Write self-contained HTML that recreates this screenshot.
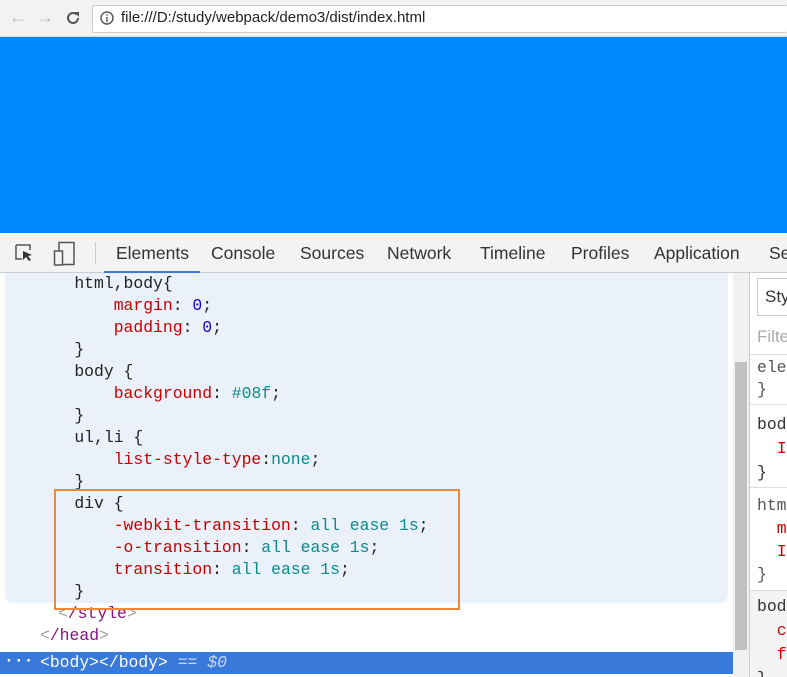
<!DOCTYPE html>
<html><head><style>
*{margin:0;padding:0;box-sizing:border-box}
body{width:787px;height:677px;overflow:hidden;position:relative;background:#fff;font-family:"Liberation Sans",sans-serif}
.abs{position:absolute}
.code{font-family:"Liberation Mono",monospace;font-size:16.4px;line-height:22px;white-space:pre;color:#222}
.r{color:#c80000}.n{color:#1c00cf}.t{color:#0a8a8a}.tag{color:#881280}.g{color:#a0a0a0}
</style></head><body>
<div class="abs" style="left:0;top:0;width:787px;height:37px;background:#f2f2f2;border-bottom:1px solid #ddd"></div>
<div class="abs" style="left:9px;top:7px;color:#bbb;font-size:18px">&#8592;</div>
<div class="abs" style="left:36px;top:7px;color:#bbb;font-size:18px">&#8594;</div>
<svg class="abs" style="left:65px;top:10px" width="16" height="16" viewBox="0 0 16 16"><path d="M13 8a5 5 0 1 1-1.5-3.6" fill="none" stroke="#555" stroke-width="2"/><path d="M9 2h5v5z" fill="#555"/></svg>
<div class="abs" style="left:92px;top:5px;width:695px;height:28px;background:#fff;border:1px solid #ccc;border-right:none;border-radius:2px"></div>
<svg class="abs" style="left:100px;top:11px" width="14" height="14"><circle cx="7" cy="7" r="6" fill="none" stroke="#555" stroke-width="1.4"/><rect x="6.3" y="6" width="1.4" height="5" fill="#555"/><rect x="6.3" y="3.2" width="1.4" height="1.4" fill="#555"/></svg>
<div class="abs" style="left:121px;top:9px;font-size:15px;color:#222">file:///D:/study/webpack/demo3/dist/index.html</div>
<div class="abs" style="left:0;top:37px;width:787px;height:196px;background:#0088ff"></div>
<div class="abs" style="left:0;top:233px;width:787px;height:40px;background:#f3f3f3;border-bottom:1px solid #ccc"></div>
<svg class="abs" style="left:14px;top:243px" width="22" height="22"><path d="M2 2h14v5M2 2v14h6" fill="none" stroke="#555" stroke-width="1.5"/><path d="M9 8l9 4-4 1 3 4-2 1-3-4-3 3z" fill="#333"/></svg>
<svg class="abs" style="left:53px;top:241px" width="24" height="26"><rect x="6" y="1.5" width="15" height="22" fill="none" stroke="#555" stroke-width="1.5"/><rect x="1.5" y="10" width="8" height="14" fill="#f3f3f3" stroke="#555" stroke-width="1.5"/></svg>
<div class="abs" style="left:95px;top:242px;width:1px;height:22px;background:#ccc"></div>
<div class="abs" style="left:104px;top:243px;font-size:17.5px;color:#333;word-spacing:0">
<span style="position:absolute;left:12px">Elements</span><span style="position:absolute;left:107px">Console</span><span style="position:absolute;left:196px">Sources</span><span style="position:absolute;left:283px">Network</span><span style="position:absolute;left:376px">Timeline</span><span style="position:absolute;left:467px">Profiles</span><span style="position:absolute;left:550px">Application</span><span style="position:absolute;left:665px">Se</span></div>
<div class="abs" style="left:104px;top:271px;width:96px;height:2px;background:#3879d9"></div>
<div class="abs" style="left:5px;top:273px;width:723px;height:330px;background:#ebf1fa;border-radius:0 0 8px 8px"></div>
<div class="abs code" style="left:35px;top:273px">    html,body{
        <span class="r">margin</span>: <span class="n">0</span>;
        <span class="r">padding</span>: <span class="n">0</span>;
    }
    body {
        <span class="r">background</span>: <span class="t">#08f</span>;
    }
    ul,li {
        <span class="r">list-style-type</span>:<span class="t">none</span>;
    }
    div {
        <span class="r">-webkit-transition</span>: <span class="t">all ease 1s</span>;
        <span class="r">-o-transition</span>: <span class="t">all ease 1s</span>;
        <span class="r">transition</span>: <span class="t">all ease 1s</span>;
    }</div>
<div class="abs code" style="left:58px;top:603px"><span class="tag"><span class="g">&lt;</span>/style<span class="g">&gt;</span></span></div>
<div class="abs code" style="left:40px;top:625px"><span class="tag"><span class="g">&lt;</span>/head<span class="g">&gt;</span></span></div>
<div class="abs" style="left:54px;top:489px;width:406px;height:121px;border:2px solid #f0883a"></div>
<div class="abs" style="left:0;top:652px;width:733px;height:22px;background:#3879d9"></div>
<div class="abs code" style="left:4px;top:650px;color:#fff;font-weight:bold">···</div>
<div class="abs code" style="left:40px;top:652px;color:#fff">&lt;body&gt;&lt;/body&gt; <span style="color:#c8d8f5">== <i>$0</i></span></div>
<div class="abs" style="left:733px;top:273px;width:16px;height:404px;background:#f1f1f1"></div>
<div class="abs" style="left:735px;top:362px;width:12px;height:288px;background:#c1c1c1"></div>
<div class="abs" style="left:749px;top:273px;width:1px;height:404px;background:#ccc"></div>
<div class="abs" style="left:750px;top:273px;width:37px;height:404px;background:#fff;overflow:hidden">
<div class="abs" style="left:7px;top:5px;width:30px;height:38px;border:1px solid #ccc;border-right:none;font-size:17px;padding:8px 0 0 7px;color:#333">Sty</div>
<div class="abs" style="left:0;top:46px;width:37px;height:36px;border-bottom:1px solid #ddd;font-size:17px;padding:8px 0 0 7px;color:#aaa">Filte</div>
<div class="abs code" style="left:7px;top:84px;line-height:22.3px;color:#555">ele
}</div>
<div class="abs" style="left:0;top:131px;width:37px;height:1px;background:#ddd"></div>
<div class="abs code" style="left:7px;top:140px;line-height:24px;color:#333">bod
  <span class="r">I</span>
}</div>
<div class="abs" style="left:0;top:214px;width:37px;height:1px;background:#ddd"></div>
<div class="abs code" style="left:7px;top:221px;line-height:23px;color:#555">htm
  <span class="r">m</span>
  <span class="r">I</span>
}</div>
<div class="abs" style="left:0;top:317px;width:37px;height:87px;background:#f4f4f4;border-top:1px solid #ddd"></div>
<div class="abs code" style="left:7px;top:322px;line-height:24px;color:#333">bod
  <span class="r">c</span>
  <span class="r">f</span>
}</div>
</div>
</body></html>
